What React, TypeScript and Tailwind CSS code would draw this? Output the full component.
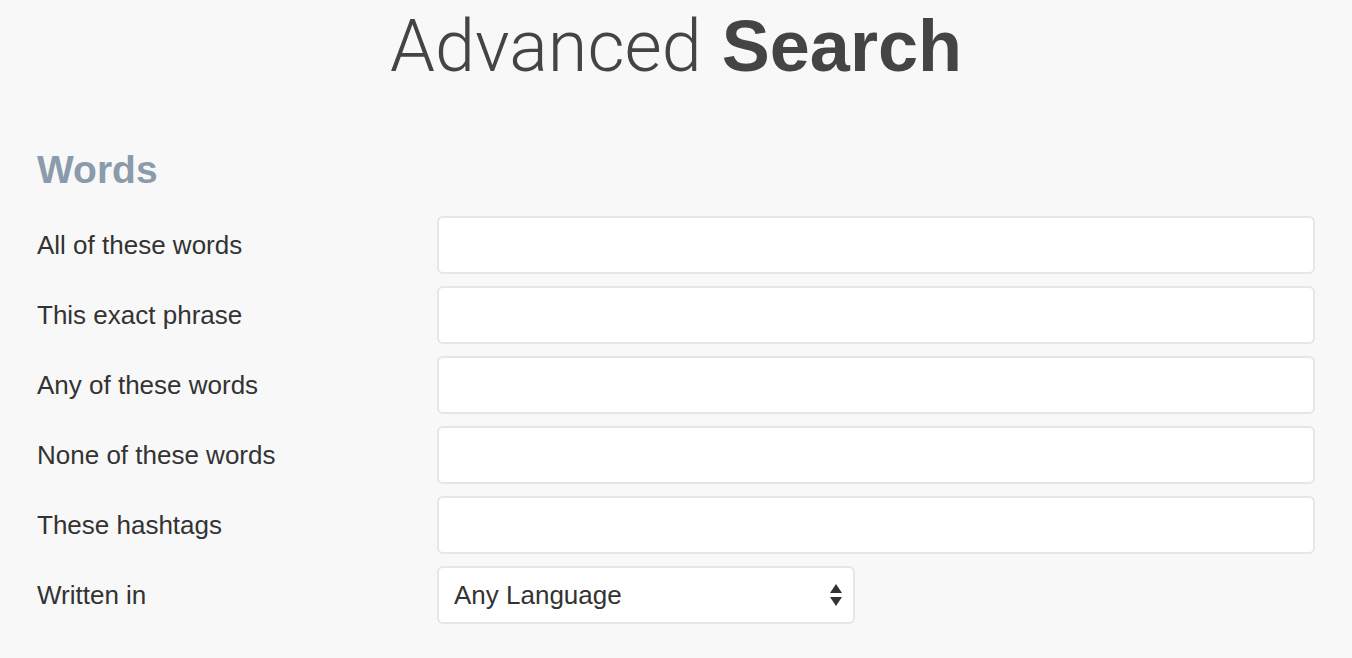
import { ChangeEvent, useState } from 'react'

const fields = [
  'All of these words',
  'This exact phrase',
  'Any of these words',
  'None of these words',
  'These hashtags',
]

export default function App() {
  const [values, setValues] = useState<Record<string, string>>({})
  const [lang, setLang] = useState('any')

  const onChange = (key: string) => (e: ChangeEvent<HTMLInputElement>) =>
    setValues((v) => ({ ...v, [key]: e.target.value }))

  return (
    <div className="min-h-screen bg-[#f8f8f8] px-[37px] text-[#333] font-['Liberation_Sans',Arial,sans-serif]">
      <h1 className="pt-[2px] text-center text-[72px] leading-[88px] text-[#444]">
        <span className="font-light font-['Roboto',sans-serif]">Advanced</span>{' '}
        <span className="font-bold">Search</span>
      </h1>

      <h2 className="mt-[55px] text-[39px] leading-[48px] font-bold text-[#8b9bab]">Words</h2>

      <div className="mt-[22px] flex flex-col gap-[12px]">
        {fields.map((label) => (
          <div key={label} className="flex items-center">
            <label className="w-[400px] shrink-0 text-[26px]">{label}</label>
            <input
              value={values[label] ?? ''}
              onChange={onChange(label)}
              className="h-[58px] flex-1 rounded-[6px] border-2 border-[#e6e6e6] bg-white px-4 text-[26px] outline-none"
            />
          </div>
        ))}

        <div className="flex items-center">
          <label className="w-[400px] shrink-0 text-[26px]">Written in</label>
          <div className="relative w-[418px]">
            <select
              value={lang}
              onChange={(e) => setLang(e.target.value)}
              className="h-[58px] w-full appearance-none rounded-[6px] border-2 border-[#e6e6e6] bg-white pl-[15px] text-[26px] outline-none"
            >
              <option value="any">Any Language</option>
              <option value="en">English</option>
            </select>
            {/* up/down arrows like the native mac select */}
            <svg
              className="pointer-events-none absolute right-[12px] top-[17px]"
              width="14"
              height="24"
              viewBox="0 0 14 24"
            >
              <path d="M7 1 L13 10 H1 Z" fill="#333" />
              <path d="M7 23 L13 14 H1 Z" fill="#333" />
            </svg>
          </div>
        </div>
      </div>
    </div>
  )
}
